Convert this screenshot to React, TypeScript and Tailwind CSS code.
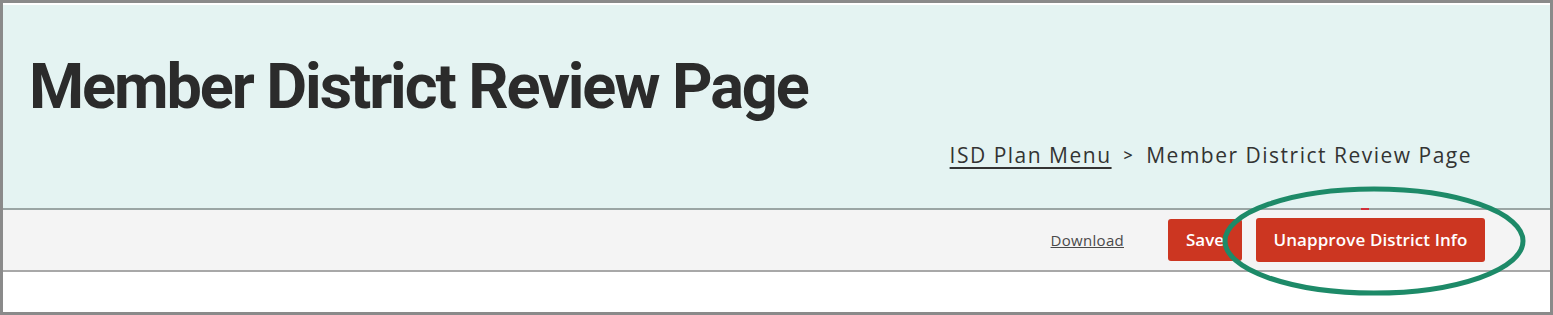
import React from 'react';

export default function App() {
  return (
    <div className="relative w-[1553px] h-[315px] bg-white border-[3px] border-[#8a8a8a] overflow-hidden">
      {/* Header */}
      <div className="h-[205px] mt-[2px] bg-[#e4f3f2] border-b-2 border-[#9aa5a4] flex flex-col pl-[26px] pr-[78px]">
        <h1 className="mt-[46px] text-[63px] leading-[72px] font-bold text-[#2b2b2b] font-['Roboto',sans-serif] tracking-[-2.1px]">
          Member District Review Page
        </h1>
        <div className="mt-[17px] self-end flex items-center text-[21px] leading-[30px] tracking-[1.5px] text-[#333] font-['Open_Sans',sans-serif]">
          <a href="#" className="underline underline-offset-[4px] decoration-[2px]">ISD Plan Menu</a>
          <span className="text-[16px] mx-[12px] font-semibold">&gt;</span>
          <span>Member District Review Page</span>
        </div>
      </div>

      {/* Toolbar */}
      <div className="h-[62px] bg-[#f4f4f4] border-b-2 border-[#a8a8a8] flex items-center justify-end pr-[65px] font-['Open_Sans',sans-serif]">
        <a href="#" className="text-[15px] text-[#4a4a4a] underline mr-[44px] tracking-[0.3px]">Download</a>
        <button className="h-[42px] w-[74px] rounded-[3px] bg-[#cc3621] text-white text-[17px] font-semibold mr-[14px]">
          Save
        </button>
        <button className="h-[44px] w-[229px] rounded-[3px] bg-[#cc3621] text-white text-[17px] font-semibold tracking-[0.1px]">
          Unapprove District Info
        </button>
      </div>

      {/* annotation */}
      <svg className="absolute left-[1217px] top-[181px]" width="308" height="114" viewBox="0 0 308 114">
        <ellipse cx="154" cy="57" rx="149" ry="52" fill="none" stroke="#1d8a68" strokeWidth="5" />
      </svg>
      <div className="absolute left-[1358px] top-[205px] w-[8px] h-[2px] bg-[#d0303a]" />
    </div>
  );
}
